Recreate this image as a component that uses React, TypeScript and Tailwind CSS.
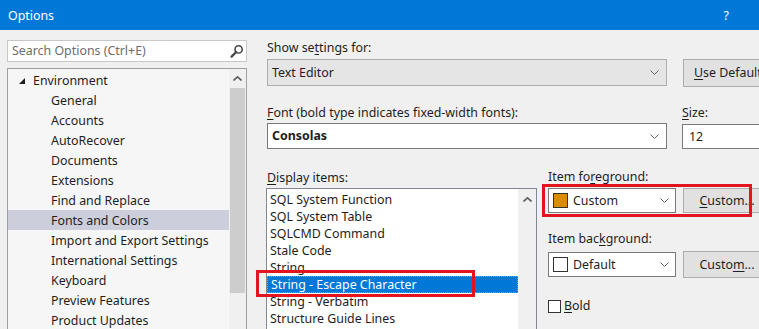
import React from "react";

function Chevron() {
  return (
    <svg width="9" height="5" viewBox="0 0 9 5" className="shrink-0">
      <path d="M0.5 0.5 L4.5 4.5 L8.5 0.5" fill="none" stroke="#606060" strokeWidth="1" />
    </svg>
  );
}

function UpArrow() {
  return (
    <svg width="9" height="5" viewBox="0 0 9 5">
      <path d="M0.5 4.5 L4.5 0.8 L8.5 4.5" fill="none" stroke="#606060" strokeWidth="1.6" />
    </svg>
  );
}

function SearchIcon() {
  return (
    <svg width="14" height="14" viewBox="0 0 14 14">
      <circle cx="8.6" cy="5.4" r="3.6" fill="none" stroke="#444" strokeWidth="1.6" />
      <path d="M6.2 8 L1.6 12.6" stroke="#444" strokeWidth="2.2" strokeLinecap="round" />
    </svg>
  );
}

function Expanded() {
  return (
    <svg width="6" height="6" viewBox="0 0 6 6">
      <polygon points="6,0 6,6 0,6" fill="#1e1e1e" />
    </svg>
  );
}

const U = ({ children }: { children: React.ReactNode }) => (
  <span className="underline underline-offset-2 decoration-1">{children}</span>
);

const treeItems = [
  "General",
  "Accounts",
  "AutoRecover",
  "Documents",
  "Extensions",
  "Find and Replace",
  "Fonts and Colors",
  "Import and Export Settings",
  "International Settings",
  "Keyboard",
  "Preview Features",
  "Product Updates",
];

const displayItems = [
  "SQL System Function",
  "SQL System Table",
  "SQLCMD Command",
  "Stale Code",
  "String",
  "String - Escape Character",
  "String - Verbatim",
  "Structure Guide Lines",
];

export default function App() {
  return (
    <div className="relative w-[759px] h-[329px] overflow-hidden bg-[#f0f0f0] font-['Noto_Sans',sans-serif] text-[12.4px] leading-[16px] text-[#1e1e1e]">
      {/* title bar */}
      <div className="flex h-[30px] items-center bg-[#0078d7] pl-[8px] pt-[1px] text-white">
        <span>Options</span>
        <span className="ml-auto mr-[30px]">?</span>
      </div>

      <div className="flex pl-[7px] pt-[10px]">
        {/* left: search + tree */}
        <div className="flex w-[240px] shrink-0 flex-col">
          <div className="flex h-[22px] items-center border border-[#c8c8c8] bg-white pl-[4px] pr-[2px] text-[#6d6d6d]">
            <span className="whitespace-nowrap">Search Options (Ctrl+E)</span>
            <span className="ml-auto">
              <SearchIcon />
            </span>
          </div>
          <div className="mt-[6px] flex h-[270px] border border-[#a0a0a0] bg-[#f6f6f6]">
            <div className="flex-1 pt-[1px]">
              <div className="flex h-[20px] items-center pl-[11px] pt-[1px]">
                <Expanded />
                <span className="ml-[8px]">Environment</span>
              </div>
              {treeItems.map((t) => (
                <div
                  key={t}
                  className={`flex h-[20px] items-center whitespace-nowrap pl-[43px] pt-[1px] ${
                    t === "Fonts and Colors" ? "bg-[#cccedb]" : ""
                  }`}
                >
                  {t}
                </div>
              ))}
            </div>
            <div className="flex w-[17px] flex-col items-center bg-[#f0f0f0]">
              <div className="flex h-[19px] items-center">
                <UpArrow />
              </div>
              <div className="h-[205px] w-[15px] bg-[#cdcdcd]" />
            </div>
          </div>
        </div>

        {/* right */}
        <div className="ml-[20px] flex flex-col">
          <div className="h-[16px] whitespace-nowrap">
            Show se<U>t</U>tings for:
          </div>
          <div className="mt-[3px] flex">
            <div className="flex h-[27px] w-[400px] items-center border border-[#adadad] bg-[#e5e5e5] pl-[4px] pr-[7px]">
              <span>Text Editor</span>
              <span className="ml-auto">
                <Chevron />
              </span>
            </div>
            <div className="ml-[16px] flex h-[28px] w-[96px] shrink-0 items-center whitespace-nowrap border border-[#adadad] bg-[#e1e1e1] pl-[10px]">
              <U>U</U>se Defaults
            </div>
          </div>

          <div className="mt-[18px] flex">
            <div className="flex w-[415px] flex-col">
              <div className="h-[16px] whitespace-nowrap">
                <U>F</U>ont (bold type indicates fixed-width fonts):
              </div>
              <div className="mt-[2px] flex h-[26px] w-[400px] items-center border border-[#7a7a7a] bg-white pl-[4px] pr-[7px]">
                <span className="font-bold">Consolas</span>
                <span className="ml-auto">
                  <Chevron />
                </span>
              </div>
            </div>
            <div className="flex flex-col">
              <div className="h-[16px]">
                <U>S</U>ize:
              </div>
              <div className="mt-[3px] flex h-[25px] w-[90px] items-center border border-[#7a7a7a] bg-white pl-[6px]">
                12
              </div>
            </div>
          </div>

          <div className="mt-[20px] flex">
            <div className="flex flex-col">
              <div className="mt-[1px] h-[16px]">
                <U>D</U>isplay items:
              </div>
              <div className="mt-[2px] flex h-[150px] w-[271px] -ml-px border border-[#828790] bg-white">
                <div className="flex-1 pt-[2px]">
                  {displayItems.map((t) => {
                    const sel = t === "String - Escape Character";
                    return (
                      <div
                        key={t}
                        className={`flex h-[17px] items-center whitespace-nowrap pl-[3px] pt-[1px] ${
                          sel ? "border border-dotted border-[#f08a24] bg-[#0078d7] pl-[2px] text-white" : ""
                        }`}
                      >
                        {t}
                      </div>
                    );
                  })}
                </div>
                <div className="flex w-[18px] flex-col items-center bg-[#f0f0f0]">
                  <div className="flex h-[20px] items-center">
                    <UpArrow />
                  </div>
                </div>
              </div>
            </div>

            <div className="ml-[11px] flex flex-col">
              <div className="h-[16px] whitespace-nowrap">
                Item fo<U>r</U>eground:
              </div>
              <div className="mt-[3px] flex">
                <div className="flex h-[25px] w-[128px] items-center border border-[#7a7a7a] bg-white pl-[4px] pr-[6px]">
                  <span className="h-[15px] w-[15px] border border-[#333] bg-[#de8a00]" />
                  <span className="ml-[5px]">Custom</span>
                  <span className="ml-auto">
                    <Chevron />
                  </span>
                </div>
                <div className="ml-[7px] flex h-[25px] w-[88px] shrink-0 items-center justify-center whitespace-nowrap border border-[#adadad] bg-[#e1e1e1]">
                  <U>C</U>ustom...
                </div>
              </div>

              <div className="mt-[18px] h-[16px] whitespace-nowrap">
                Item bac<U>k</U>ground:
              </div>
              <div className="mt-[4px] flex items-center">
                <div className="flex h-[25px] w-[128px] items-center border border-[#7a7a7a] bg-white pl-[4px] pr-[6px]">
                  <span className="h-[15px] w-[15px] border border-[#333] bg-white" />
                  <span className="ml-[5px]">Default</span>
                  <span className="ml-auto">
                    <Chevron />
                  </span>
                </div>
                <div className="ml-[7px] flex h-[27px] w-[88px] shrink-0 items-center justify-center whitespace-nowrap border border-[#adadad] bg-[#e1e1e1]">
                  Custo<U>m</U>...
                </div>
              </div>

              <div className="mt-[20px] flex items-center">
                <span className="h-[13px] w-[13px] border border-[#333] bg-white" />
                <span className="ml-[3px]">
                  <U>B</U>old
                </span>
              </div>
            </div>
          </div>
        </div>
      </div>

      {/* red highlight boxes drawn over the dialog */}
      <div className="absolute left-[256px] top-[270px] h-[27px] w-[219px] border-[3px] border-[#e3141f]" />
      <div className="absolute left-[542px] top-[184px] h-[33px] w-[210px] border-[3px] border-[#e3141f]" />
    </div>
  );
}
